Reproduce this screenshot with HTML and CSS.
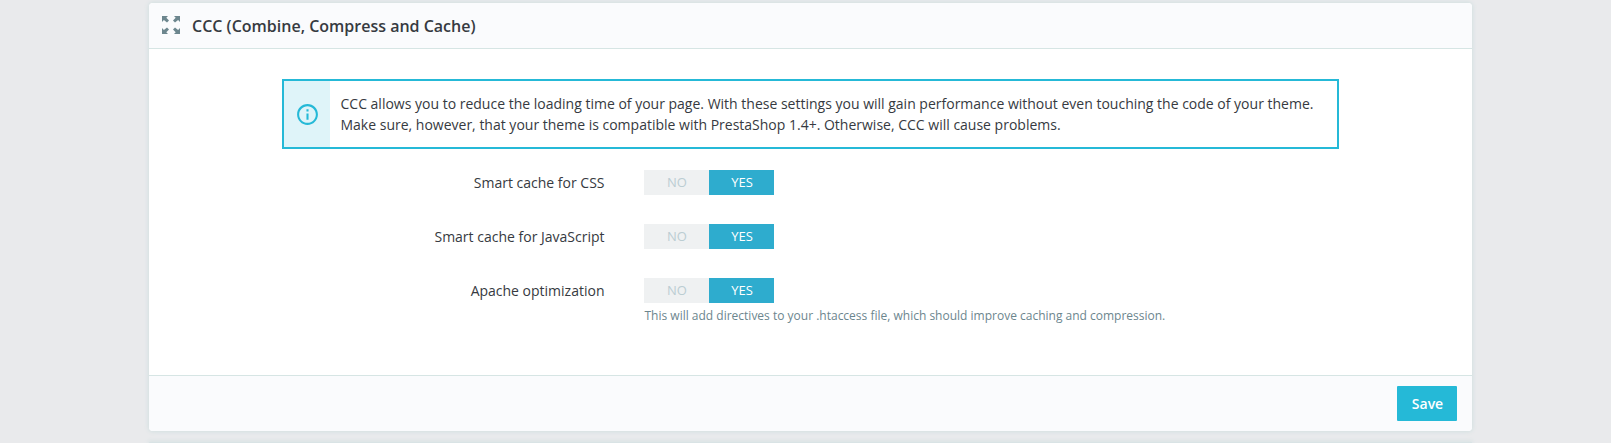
FILE: index.html
```html
<!DOCTYPE html>
<html lang="en">

<head>
    <meta charset="UTF-8">
    <meta name="viewport" content="width=device-width, initial-scale=1.0">
    <title>Performance</title>
    <link rel="stylesheet" href="styles.css">
</head>

<body>
    <form class="panel">
        <h3 class="panel-heading">
            <svg class="icon-expand" viewBox="0 0 20 20" width="20" height="20">
                <path d="M1 1h6L5.300 2.700 8 5.400 6 7.400 2.900 5.100 1 7z" />
                <path d="M19 1v6L17.100 5.100 14 7.400 12 5.400 14.700 2.700 13 1z" />
                <path d="M1 19v-6L2.900 14.900 6 12.600 8 14.600 5.300 17.300 7 19z" />
                <path d="M19 19h-6L14.700 17.300 12 14.600 14 12.600 17.100 14.900 19 13z" />
            </svg>
            <span>CCC (Combine, Compress and Cache)</span>
        </h3>

        <div class="panel-body">
            <div class="alert">
                <div class="alert-icon">
                    <svg viewBox="0 0 24 24" width="25" height="25">
                        <path d="M11 17h2v-6h-2v6zm1-15C6.480 2 2 6.480 2 12s4.480 10 10 10 10-4.480 10-10S17.520 2 12 2zm0 18c-4.410 0-8-3.590-8-8s3.590-8 8-8 8 3.590 8 8-3.590 8-8 8zM11 9h2V7h-2v2z" />
                    </svg>
                </div>
                <p class="alert-text">
                    CCC allows you to reduce the loading time of your page. With these settings you will gain performance without even touching the code of your theme.<br>
                    Make sure, however, that your theme is compatible with PrestaShop 1.4+. Otherwise, CCC will cause problems.
                </p>
            </div>

            <div class="form-row">
                <label class="form-label">Smart cache for CSS</label>
                <div class="switch"><span>NO</span><span class="active">YES</span></div>
            </div>
            <div class="form-row">
                <label class="form-label">Smart cache for JavaScript</label>
                <div class="switch"><span>NO</span><span class="active">YES</span></div>
            </div>
            <div class="form-row">
                <label class="form-label">Apache optimization</label>
                <div>
                    <div class="switch"><span>NO</span><span class="active">YES</span></div>
                    <small class="help-text">This will add directives to your .htaccess file, which should improve caching and compression.</small>
                </div>
            </div>
        </div>

        <div class="panel-footer">
            <button type="button" class="btn-save">Save</button>
        </div>
    </form>

    <div class="panel"></div>
</body>

</html>
```

FILE: styles.css
```css
* {
    margin: 0;
    padding: 0;
    box-sizing: border-box;
}

body {
    height: 443px;
    padding: 3px 139px 0 149px;
    background: #e9eaec;
    color: #363a41;
    font-family: "Open Sans", sans-serif;
    font-size: 14px;
    overflow: hidden;
}

.panel {
    background: #fff;
    border-radius: 4px;
    box-shadow: 0 0 4px 1px #d3e0e1;
    overflow: hidden;
}

.panel + .panel {
    height: 1px;
    margin-top: 11px;
    background: #d9e3e5;
}

.panel-heading {
    display: flex;
    align-items: center;
    gap: 11px;
    height: 46px;
    padding-left: 12px;
    background: #fafbfd;
    border-bottom: 1px solid #d6e5e4;
    font-size: 16px;
    font-weight: 600;
}

.icon-expand {
    margin-bottom: 2px;
    fill: #6c868e;
}

.panel-body {
    height: 326px;
    padding: 30px 133px 0;
}

.alert {
    display: flex;
    height: 70px;
    margin-bottom: 21px;
    border: 2px solid #25b9d7;
}

.alert-icon {
    display: flex;
    align-items: center;
    justify-content: center;
    width: 46px;
    background: #dff4f9;
    fill: #25b9d7;
}

.alert-text {
    padding: 12px 0 0 10.5px;
    line-height: 21px;
    white-space: nowrap;
}

.form-row {
    display: flex;
    gap: 39.5px;
    height: 54px;
}

.form-label {
    width: 322.5px;
    line-height: 25px;
    text-align: right;
}

.switch {
    display: flex;
    width: 130px;
    height: 25px;
}

.switch span {
    flex: 1;
    padding-left: 1px;
    background: #eff1f2;
    color: #bbcdd2;
    font-size: 13px;
    line-height: 25px;
    text-align: center;
}

.switch .active {
    background: #2eacce;
    color: #fff;
}

.help-text {
    display: block;
    margin-top: 5px;
    padding-left: 0.5px;
    color: #6c868e;
    font-size: 12px;
    line-height: 16px;
}

.panel-footer {
    display: flex;
    justify-content: flex-end;
    height: 56px;
    padding: 10px 15px 0 0;
    background: #fafbfd;
    border-top: 1px solid #d6e5e4;
}

.btn-save {
    width: 60px;
    height: 35px;
    padding-left: 1px;
    border: none;
    border-radius: 1px;
    background: #25b9d7;
    color: #fff;
    font-family: inherit;
    font-size: 14px;
    font-weight: 600;
}
```
